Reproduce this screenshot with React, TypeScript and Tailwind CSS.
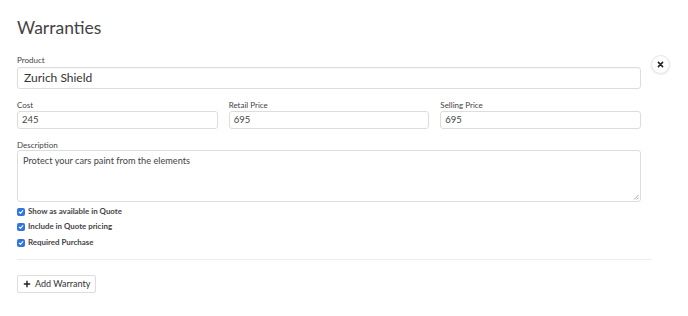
import React from "react";

function Check({ label }: { label: string }) {
  return (
    <label className="flex items-center gap-[3px] h-[9px]">
      <span className="w-[8px] h-[8px] rounded-[2px] bg-[#2f74e0] flex items-center justify-center">
        <svg width="6" height="6" viewBox="0 0 10 10">
          <path d="M2 5.2 L4.2 7.3 L8 2.8" fill="none" stroke="white" strokeWidth="1.8" strokeLinecap="round" strokeLinejoin="round" />
        </svg>
      </span>
      <span className="text-[7.9px] font-bold text-[#444] leading-none">{label}</span>
    </label>
  );
}

export default function App() {
  return (
    <div className="w-[688px] h-[316px] bg-white px-[17px] pt-[15px] text-[#444]" style={{ fontFamily: 'Lato, "Open Sans", sans-serif' }}>
      <h1 className="text-[17.5px] leading-[26px] text-[#444] font-normal">Warranties</h1>
      <div className="flex mt-[14px]">
        <div className="w-[624px]">
          <div className="text-[8px] leading-[10px] text-[#444]">Product</div>
          <div className="mt-[2px] h-[22px] border border-[#ddd] rounded-[3px] flex items-center px-[6px] text-[12px] text-[#333] shadow-[inset_0_1px_1px_rgba(0,0,0,0.03)]">Zurich Shield</div>

          <div className="grid grid-cols-3 gap-[11px] mt-[11px]">
            {[["Cost", "245"], ["Retail Price", "695"], ["Selling Price", "695"]].map(([l, v]) => (
              <div key={l}>
                <div className="text-[8px] leading-[10px] text-[#444]">{l}</div>
                <div className="mt-[1px] h-[18px] border border-[#ddd] rounded-[3px] flex items-center px-[4px] text-[9.5px] text-[#444]">{v}</div>
              </div>
            ))}
          </div>

          <div className="mt-[11px] text-[8px] leading-[10px] text-[#444]">Description</div>
          <div className="relative h-[52px] border border-[#ddd] rounded-[3px] px-[5px] pt-[3px] text-[9.2px] text-[#444]">
            Protect your cars paint from the elements
            <svg className="absolute right-[1px] bottom-[1px]" width="6" height="6" viewBox="0 0 6 6">
              <path d="M5.5 1 L1 5.5 M5.5 3.5 L3.5 5.5" stroke="#999" strokeWidth="0.8" />
            </svg>
          </div>

          <div className="mt-[5px] flex flex-col gap-[6.5px]">
            <Check label="Show as available in Quote" />
            <Check label="Include in Quote pricing" />
            <Check label="Required Purchase" />
          </div>
        </div>
        <div className="ml-[10px] mt-0">
          <button className="w-[19px] h-[19px] rounded-full bg-white border border-[#e6e6e6] shadow-[0_1px_2px_rgba(0,0,0,0.08)] flex items-center justify-center">
            <svg width="7" height="7" viewBox="0 0 10 10">
              <path d="M2 2 L8 8 M8 2 L2 8" stroke="#222" strokeWidth="2.2" strokeLinecap="round" />
            </svg>
          </button>
        </div>
      </div>
      <div className="mt-[12px] w-[635px] h-px bg-[#ececec]" />
      <button className="mt-[15px] h-[18px] px-[5px] border border-[#ddd] rounded-[2px] flex items-center gap-[4px] text-[9px] text-[#333]">
        <svg width="8" height="8" viewBox="0 0 10 10">
          <path d="M5 1 V9 M1 5 H9" stroke="#222" strokeWidth="1.8" />
        </svg>
        Add Warranty
      </button>
    </div>
  );
}
